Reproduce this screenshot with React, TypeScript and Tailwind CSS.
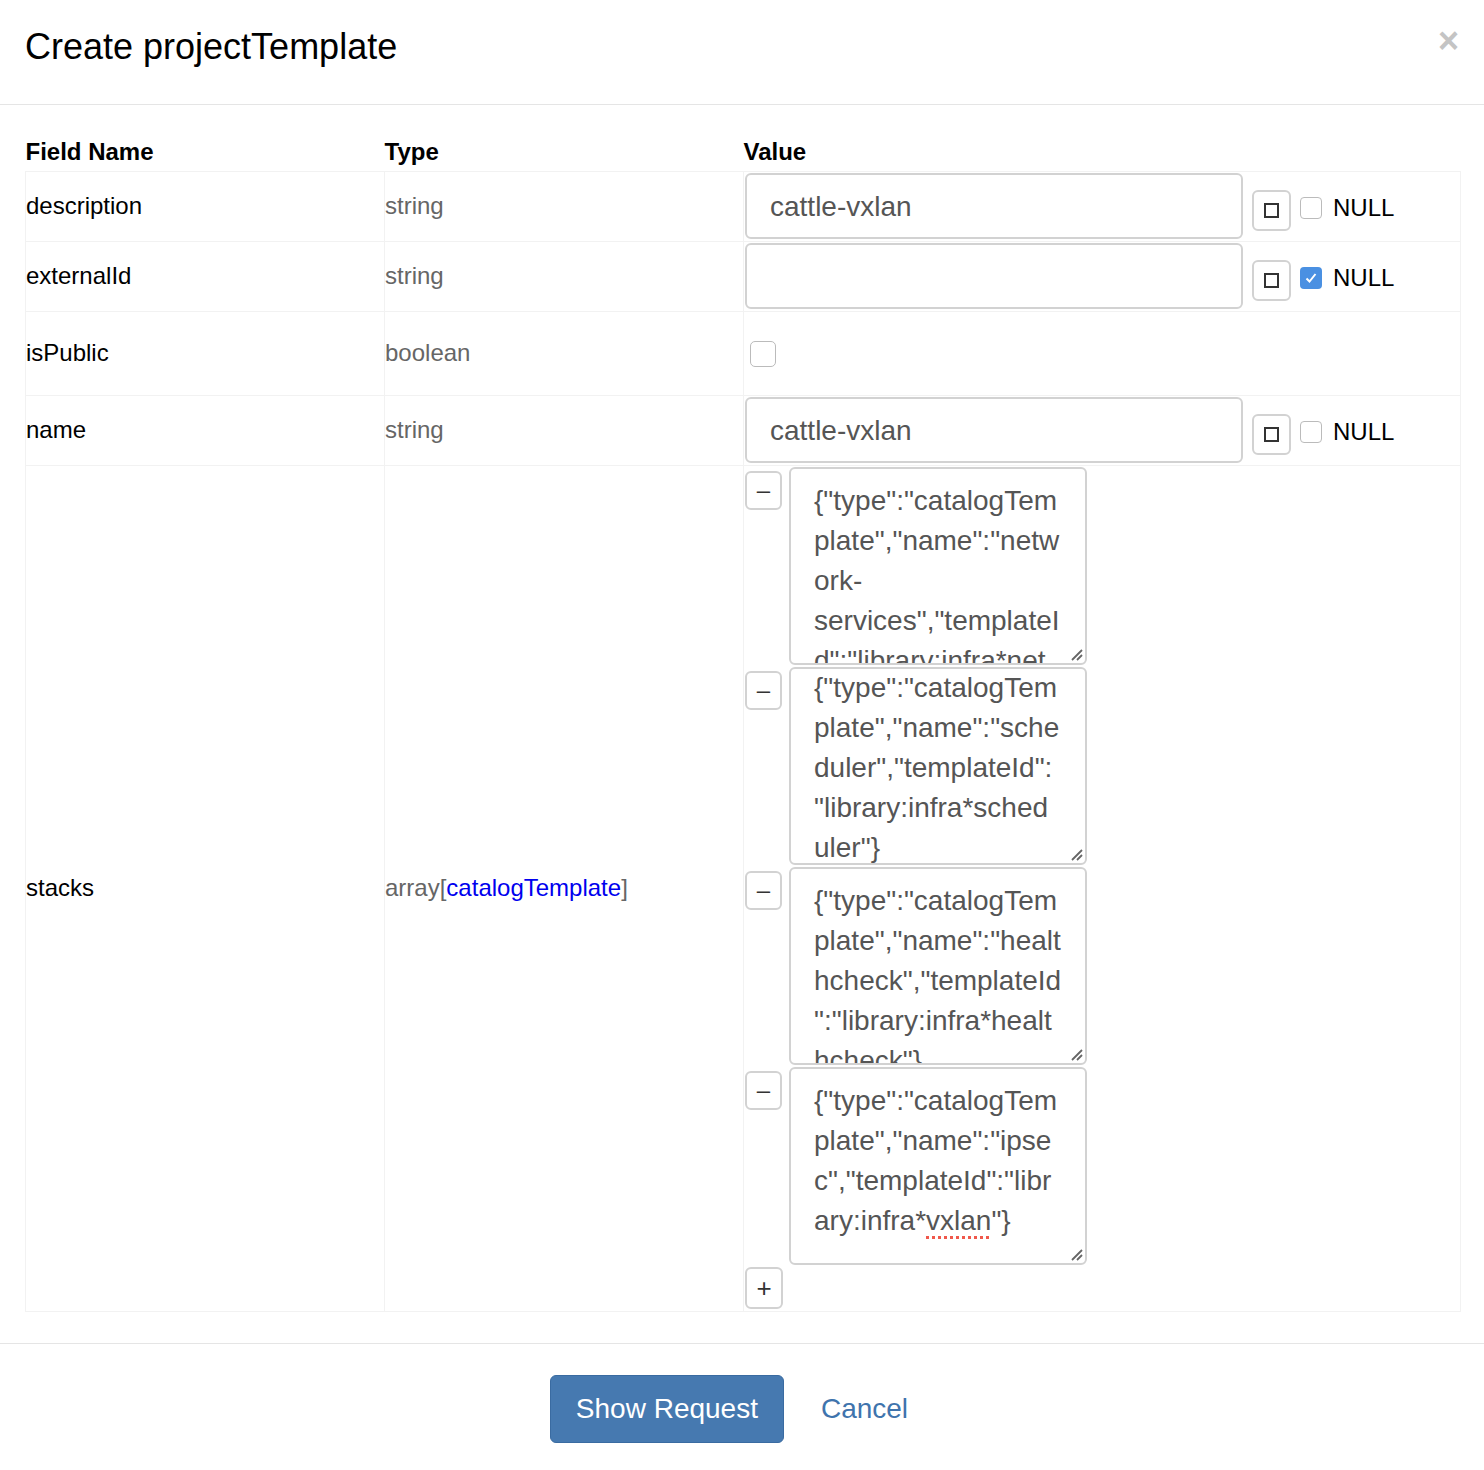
import React from "react";

const font = { fontFamily: '"Liberation Sans", Arial, sans-serif' };

const stacks = [
	{
		lines: ['{"type":"catalogTem', 'plate","name":"netw', "ork-", 'services","templateI', 'd":"library:infra*net'],
		scrolled: false,
	},
	{
		lines: ['{"type":"catalogTem', 'plate","name":"sche', 'duler","templateId":', '"library:infra*sched', 'uler"}'],
		scrolled: true,
	},
	{
		lines: ['{"type":"catalogTem', 'plate","name":"healt', 'hcheck","templateId', '":"library:infra*healt', 'hcheck"}'],
		scrolled: false,
	},
	{
		lines: ['{"type":"catalogTem', 'plate","name":"ipse', 'c","templateId":"libr', "ary:infra*vxlan\"}"],
		scrolled: false,
	},
];

const Grip = () => (
	<svg className="absolute right-[2px] bottom-[2px]" width="14" height="14" viewBox="0 0 14 14">
		<path d="M3 13 L13 3 M8 13 L13 8" stroke="#666" strokeWidth="1.8" />
	</svg>
);

const NullToggle = ({ checked }: { checked?: boolean }) => (
	<div className="flex items-center">
		{/* set-empty button */}
		<button className="ml-[9px] mt-[9px] w-[39px] h-[41px] border-2 border-[#d2d2d2] rounded-[6px] bg-white flex items-center justify-center">
			<span className="block w-[15px] h-[15px] border-2 border-[#333]" />
		</button>
		<span
			className={
				checked
					? "ml-[9px] mt-[4px] w-[22px] h-[22px] rounded-[4px] bg-[#4a90e2] flex items-center justify-center"
					: "ml-[9px] mt-[4px] w-[22px] h-[22px] rounded-[4px] border border-[#bbb] bg-white"
			}
		>
			{checked && (
				<svg width="14" height="14" viewBox="0 0 14 14">
					<path d="M2.5 7.5 L5.5 10.5 L11.5 3" stroke="white" strokeWidth="2" fill="none" />
				</svg>
			)}
		</span>
		<span className="ml-[11px] mt-[4px] text-[24px] text-black">NULL</span>
	</div>
);

const TextInput = ({ value }: { value: string }) => (
	<div className="w-[498px] h-[66px] border-2 border-[#d2d2d2] rounded-[6px] px-[23px] flex items-center text-[28px] text-[#555]">
		<span className="mt-[2px]">{value}</span>
	</div>
);

export default function App() {
	return (
		<div className="w-[1484px] min-h-[1470px] bg-white text-black" style={font}>
			{/* header */}
			<div className="h-[105px] border-b border-[#e5e5e5] flex items-center justify-between pl-[25px] pr-[26px]">
				<h4 className="text-[36px] mt-[-10px] text-black">Create projectTemplate</h4>
				<span className="text-[36px] font-bold text-[#c4c4c4] mt-[-22px] mr-[-1px] leading-none">×</span>
			</div>

			{/* body */}
			<div className="px-[25px] pt-[33px] pb-[31px]">
				<table className="w-[1436px] border-collapse table-fixed">
					<thead>
						<tr className="h-[33px] align-top">
							<th className="w-[359px] text-left text-[24px] font-bold leading-[28px]">Field Name</th>
							<th className="w-[359px] text-left text-[24px] font-bold leading-[28px]">Type</th>
							<th className="text-left text-[24px] font-bold leading-[28px]">Value</th>
						</tr>
					</thead>
					<tbody className="text-[24px]">
						<tr className="h-[70px] border border-[#f2f2f2]">
							<td className="border border-[#f2f2f2]">description</td>
							<td className="border border-[#f2f2f2] text-[#666]">string</td>
							<td className="border border-[#f2f2f2] p-px">
								<div className="flex items-center">
									<TextInput value="cattle-vxlan" />
									<NullToggle />
								</div>
							</td>
						</tr>
						<tr className="h-[70px]">
							<td className="border border-[#f2f2f2]">externalId</td>
							<td className="border border-[#f2f2f2] text-[#666]">string</td>
							<td className="border border-[#f2f2f2] p-px">
								<div className="flex items-center">
									<TextInput value="" />
									<NullToggle checked />
								</div>
							</td>
						</tr>
						<tr className="h-[84px]">
							<td className="border border-[#f2f2f2]">isPublic</td>
							<td className="border border-[#f2f2f2] text-[#666]">boolean</td>
							<td className="border border-[#f2f2f2] p-px">
								<span className="block ml-[5px] mt-[1px] w-[26px] h-[26px] rounded-[5px] border border-[#bbb] bg-white" />
							</td>
						</tr>
						<tr className="h-[70px]">
							<td className="border border-[#f2f2f2]">name</td>
							<td className="border border-[#f2f2f2] text-[#666]">string</td>
							<td className="border border-[#f2f2f2] p-px">
								<div className="flex items-center">
									<TextInput value="cattle-vxlan" />
									<NullToggle />
								</div>
							</td>
						</tr>
						<tr>
							<td className="border border-[#f2f2f2]">stacks</td>
							<td className="border border-[#f2f2f2] text-[#666]">
								array[<span className="text-[#0000ee]">catalogTemplate</span>]
							</td>
							<td className="border border-[#f2f2f2] p-px align-top">
								<div className="flex flex-col">
									{stacks.map((s, i) => (
										<div key={i} className="flex gap-[7px] mb-[2px]">
											<button className="mt-[4px] w-[37px] h-[39px] border-2 border-[#d2d2d2] rounded-[6px] bg-white text-[24px] text-[#333] leading-none flex items-center justify-center">
												–
											</button>
											<div className="relative w-[298px] h-[198px] border-2 border-[#d2d2d2] rounded-[6px] overflow-hidden bg-white">
												<div
													className={
														s.scrolled
															? "pl-[23px] pt-0 mt-[-1px] text-[28px] leading-[40px] text-[#555] whitespace-pre"
															: "pl-[23px] pt-[12px] text-[28px] leading-[40px] text-[#555] whitespace-pre"
													}
												>
													{s.lines.map((l, j) =>
														l === 'ary:infra*vxlan"}' ? (
															<div key={j}>
																ary:infra*
																<span className="underline decoration-dotted decoration-[#f0584c] decoration-[3px] underline-offset-[6px]">
																	vxlan
																</span>
																{'"}'}
															</div>
														) : (
															<div key={j}>{l}</div>
														),
													)}
												</div>
												<Grip />
											</div>
										</div>
									))}
									<button className="w-[38px] h-[42px] border-2 border-[#d2d2d2] rounded-[6px] bg-white text-[26px] text-[#333] leading-none flex items-center justify-center mb-px">
										+
									</button>
								</div>
							</td>
						</tr>
					</tbody>
				</table>
			</div>

			{/* footer */}
			<div className="border-t border-[#e5e5e5] pt-[31px] flex justify-center items-center gap-[37px] pr-[26px]">
				<button className="w-[234px] h-[68px] bg-[#4679b0] border border-[#3a6ba1] rounded-[6px] text-white text-[28px]">
					Show Request
				</button>
				<a className="text-[28px] text-[#3f74ad]">Cancel</a>
			</div>
		</div>
	);
}
